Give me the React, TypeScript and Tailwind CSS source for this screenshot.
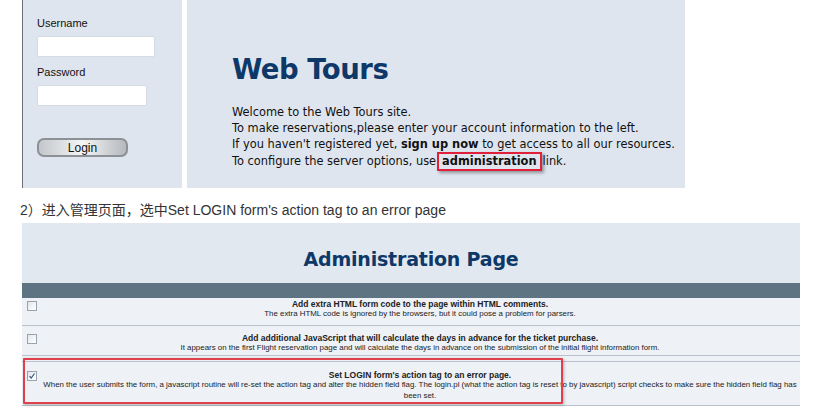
import React from "react";

const verdana = { fontFamily: '"DejaVu Sans", Verdana, sans-serif' };
const tahoma = { fontFamily: '"Liberation Sans", Tahoma, sans-serif' };

function Checkbox({ checked }: { checked?: boolean }) {
  return (
    <div className="w-[10px] h-[10px] border border-[#9aa3ad] bg-gradient-to-br from-[#e3e7eb] to-[#ffffff] flex items-center justify-center shrink-0">
      {checked && (
        <svg width="8" height="8" viewBox="0 0 8 8">
          <path d="M1.5 4.2 L3.2 6 L6.5 1.5" stroke="#3b5a7a" strokeWidth="1.2" fill="none" />
        </svg>
      )}
    </div>
  );
}

export default function App() {
  return (
    <div className="w-[816px] h-[411px] bg-white overflow-hidden relative">
      {/* top: login page */}
      <div className="flex h-[188px]">
        <div className="ml-[22px] w-[160px] bg-[#dfe5ee] border-l border-[#6b6f75] pl-[14px] pt-[16px]" style={tahoma}>
          <div className="text-[11px] text-[#111] leading-[14px]">Username</div>
          <div className="mt-[6px] w-[118px] h-[21px] bg-white rounded-[2px] border border-[#d5dbe4]" />
          <div className="mt-[8px] text-[11px] text-[#111] leading-[14px]">Password</div>
          <div className="mt-[6px] w-[110px] h-[21px] bg-white rounded-[2px] border border-[#d5dbe4]" />
          <div className="mt-[32px] w-[91px] h-[19px] rounded-[7px] border-2 border-[#8c9196] bg-gradient-to-r from-[#c3c7cb] via-[#f4f5f6] to-[#b5b9bd] flex items-center justify-center text-[12px] text-[#111]">
            Login
          </div>
        </div>
        <div className="ml-[5px] w-[498px] bg-[#dfe5ee] pl-[45px] pt-[52px]" style={verdana}>
          <div className="text-[27.5px] font-bold text-[#0e3868] leading-[34px] tracking-[-0.5px]">Web Tours</div>
          <div className="mt-[18px] text-[11.4px] leading-[16px] text-[#111]">
            <div>Welcome to the Web Tours site.</div>
            <div>To make reservations,please enter your account information to the left.</div>
            <div>
              If you haven't registered yet, <b>sign up now</b> to get access to all our resources.
            </div>
            <div>
              To configure the server options, use
              <span className="inline-block ml-[1px] mr-[1px] border-2 border-[#e0203a] px-[3px] leading-[15px] font-bold shadow-[2px_2px_3px_rgba(0,0,0,0.35)]">
                administration
              </span>
              link.
            </div>
          </div>
        </div>
      </div>

      {/* caption */}
      <div
        className="pl-[20px] pt-[13px] text-[14px] leading-[18px] text-[#333]"
        style={{ fontFamily: '"Liberation Sans", Arial, "Noto Sans CJK SC", sans-serif' }}
      >
        2）进入管理页面，选中Set LOGIN form's action tag to an error page
      </div>

      {/* admin page */}
      <div className="ml-[22px] mt-[4px] w-[778px] relative" style={tahoma}>
        <div className="h-[60px] bg-[#e2e8f0] flex items-center justify-center pt-[12px]">
          <div className="text-[19px] font-bold text-[#0e3868] tracking-[-0.2px]" style={verdana}>
            Administration Page
          </div>
        </div>
        <div className="h-[15px] bg-[#5f7482]" />

        <div className="h-[28px] flex bg-[#eef1f6] border-b border-[#b9c2cc]">
          <div className="w-[18px] pl-[5px] pt-[3px]">
            <Checkbox />
          </div>
          <div className="flex-1 text-center text-[#222] pt-[1px]">
            <div className="font-bold text-[8.5px] leading-[10px]">
              Add extra HTML form code to the page within HTML comments.
            </div>
            <div className="text-[7.9px] leading-[10px]">
              The extra HTML code is ignored by the browsers, but it could pose a problem for parsers.
            </div>
          </div>
        </div>

        <div className="h-[30px] flex bg-[#eef1f6] border-b border-[#b9c2cc]">
          <div className="w-[18px] pl-[5px] pt-[8px]">
            <Checkbox />
          </div>
          <div className="flex-1 text-center text-[#222] pt-[7px]">
            <div className="font-bold text-[8.5px] leading-[10px]">
              Add additional JavaScript that will calculate the days in advance for the ticket purchase.
            </div>
            <div className="text-[7.9px] leading-[10px]">
              It appears on the first Flight reservation page and will calculate the days in advance on the submission of the initial flight information form.
            </div>
          </div>
        </div>

        <div className="h-[6px] bg-[#eef1f6] border-b border-[#b9c2cc]" />

        <div className="h-[44px] flex bg-[#eef1f6] border-b border-[#b9c2cc]">
          <div className="w-[18px] pl-[5px] pt-[9px]">
            <Checkbox checked />
          </div>
          <div className="flex-1 text-center text-[#222] pt-[8px] px-[2px]">
            <div className="font-bold text-[8.5px] leading-[10px]">Set LOGIN form's action tag to an error page.</div>
            <div className="text-[7.9px] leading-[10.5px]">
              When the user submits the form, a javascript routine will re-set the action tag and alter the hidden field flag. The login.pl (what the action tag is reset to by javascript) script checks to make sure the hidden field flag has been set.
            </div>
          </div>
        </div>

        <div className="absolute left-[1px] top-[135px] w-[540px] h-[46px] border-2 border-[#e0404e] rounded-[1px] shadow-[1px_1px_3px_rgba(0,0,0,0.25)]" />
      </div>
    </div>
  );
}
